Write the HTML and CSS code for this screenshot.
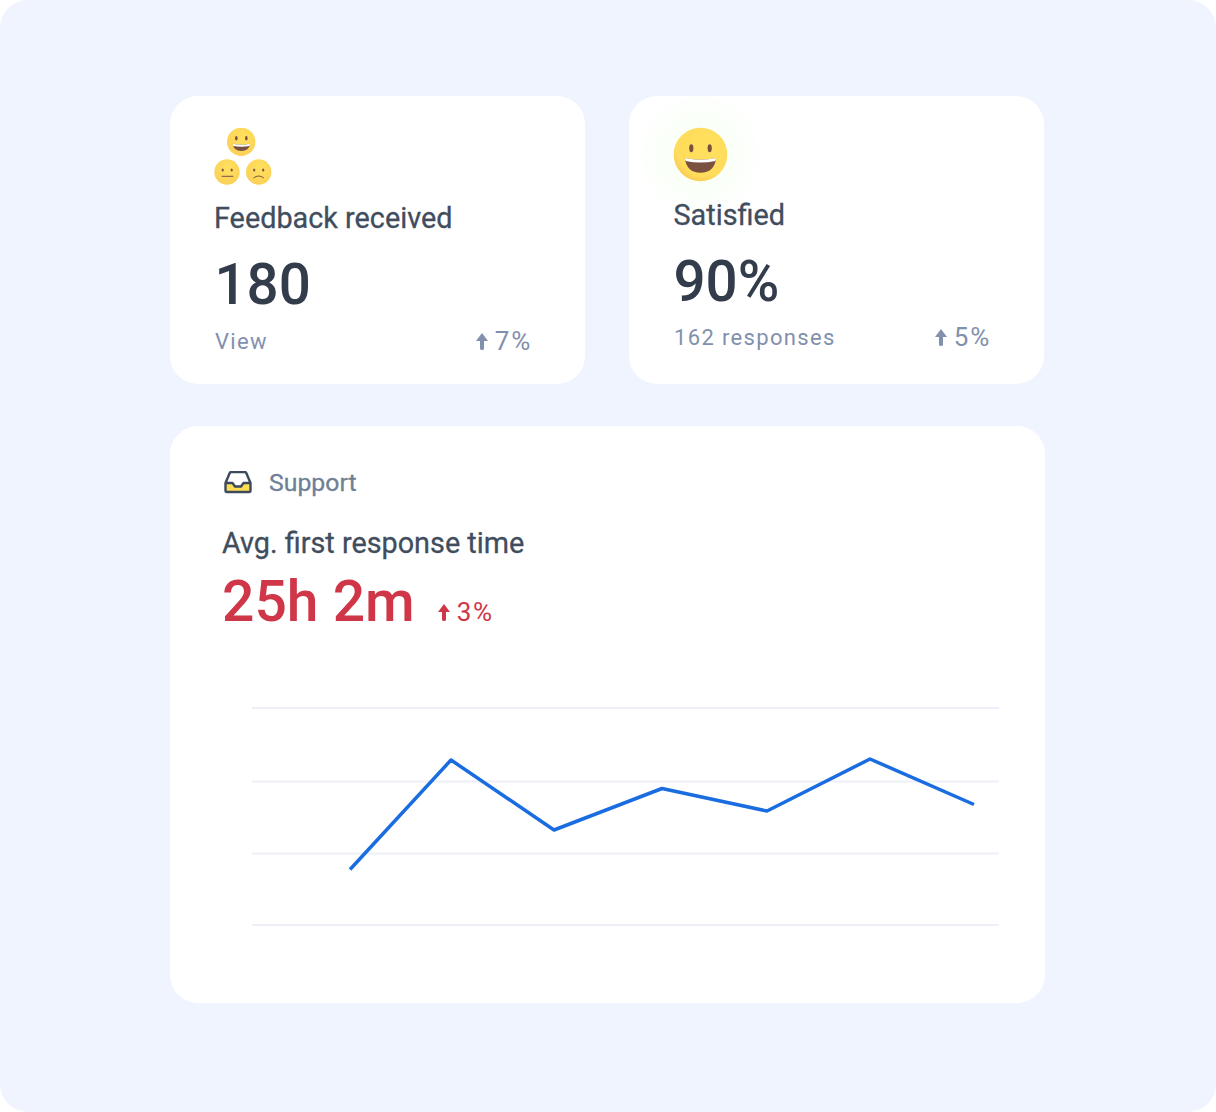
FILE: index.html
```html
<!DOCTYPE html>
<html lang="en">
<head>
<meta charset="utf-8">
<title>Feedback dashboard</title>
<link rel="stylesheet" href="styles.css">
</head>
<body>
<main class="page">
  <div class="top-row">
    <section class="card stat">
      <svg class="trio" width="58" height="58" viewBox="0 0 58 58" aria-hidden="true">
        <defs>
          <radialGradient id="fa" cx="55%" cy="35%" r="70%"><stop offset="0" stop-color="#FFE15E"/><stop offset="1" stop-color="#FBCF56"/></radialGradient>
        </defs>
        <circle cx="27.200" cy="13.800" r="14.200" fill="url(#fa)"/>
        <ellipse cx="22.300" cy="10.300" rx="1.300" ry="2.200" fill="#7A5140"/>
        <ellipse cx="32.300" cy="10.300" rx="1.300" ry="2.200" fill="#7A5140"/>
        <path d="M18.700 15.700q8.600 2 17.300 0q-.8 7.300-8.650 7.300t-8.650-7.300z" fill="#7A5140"/>
        <path d="M18.700 15.700q8.600 2 17.300 0l-.5 2.200q-8.150 1.500-16.300 0z" fill="#fff"/>
        <circle cx="13" cy="44" r="12.700" fill="url(#fa)"/>
        <ellipse cx="8.700" cy="42" rx="1.100" ry="1.500" fill="#7A5140"/>
        <ellipse cx="17.700" cy="42" rx="1.100" ry="1.500" fill="#7A5140"/>
        <path d="M7.700 48.300h11.600" stroke="#7A5140" stroke-width="1" fill="none"/>
        <circle cx="44.700" cy="44" r="12.700" fill="url(#fa)"/>
        <ellipse cx="40.200" cy="42" rx="1.100" ry="1.500" fill="#7A5140"/>
        <ellipse cx="49.200" cy="42" rx="1.100" ry="1.500" fill="#7A5140"/>
        <path d="M39.500 50q5.200-4 10.400 0" stroke="#7A5140" stroke-width="1" fill="none"/>
      </svg>
      <h2 class="label">Feedback received</h2>
      <p class="number">180</p>
      <div class="foot">
        <span class="sub">View</span>
        <span class="delta">
          <svg class="arrow" width="14" height="18" viewBox="0 0 14 18" aria-hidden="true"><path d="M7 1L13 9H9V16.500a2 1.500 0 0 1-4 0V9H1z" fill="#8190AD"/></svg>7%
        </span>
      </div>
    </section>
    <section class="card stat glow">
      <svg class="smile" width="55" height="55" viewBox="0 0 55 55" aria-hidden="true">
        <defs>
          <radialGradient id="fb" cx="58%" cy="38%" r="65%"><stop offset="0" stop-color="#FFE15E"/><stop offset=".8" stop-color="#FFDC5B"/><stop offset="1" stop-color="#FBCB56"/></radialGradient>
        </defs>
        <circle cx="27.500" cy="27.500" r="26.800" fill="url(#fb)"/>
        <ellipse cx="18.300" cy="21.300" rx="2.100" ry="4" fill="#7A5140"/>
        <ellipse cx="36.700" cy="21.300" rx="2.100" ry="4" fill="#7A5140"/>
        <path d="M11.700 31q15.800 3.500 31.600 0q-2 14.700-15.800 14.700t-15.800-14.700z" fill="#7A5140"/>
        <path d="M11.700 31q15.800 3.500 31.600 0l-.9 3q-14.900 3-29.800 0z" fill="#fff"/>
      </svg>
      <h2 class="label">Satisfied</h2>
      <p class="number">90%</p>
      <div class="foot">
        <span class="sub">162 responses</span>
        <span class="delta">
          <svg class="arrow" width="14" height="18" viewBox="0 0 14 18" aria-hidden="true"><path d="M7 1L13 9H9V16.500a2 1.500 0 0 1-4 0V9H1z" fill="#8190AD"/></svg>5%
        </span>
      </div>
    </section>
  </div>
  <section class="card wide">
    <div class="tag">
      <svg width="30" height="24" viewBox="0 1 30 24" aria-hidden="true">
        <path d="M2 13H10.500L12.500 16H17.500L19.500 13H28V22H2z" fill="#FFDD55"/>
        <path d="M2.500 13V20.500A1.500 1.500 0 0 0 4 22H26A1.500 1.500 0 0 0 27.500 20.500V13L23.500 3.500A2 2 0 0 0 21.700 2H8.300A2 2 0 0 0 6.500 3.500zM2.500 13H9.500L12 16.500H18L20.500 13H27.500" fill="none" stroke="#3C4A5B" stroke-width="2.400" stroke-linejoin="round"/>
      </svg>
      <span class="tag-name">Support</span>
    </div>
    <h2 class="label metric">Avg. first response time</h2>
    <div class="result">
      <span class="result-num">25h 2m</span>
      <span class="result-delta">
        <svg width="14" height="18" viewBox="0 0 14 18" aria-hidden="true"><path d="M7 1L13 9H9V16.500a2 1.500 0 0 1-4 0V9H1z" fill="#CF3647"/></svg>3%
      </span>
    </div>
    <svg class="chart" width="875" height="260" viewBox="0 0 875 260" aria-hidden="true">
      <g stroke="#EEF0F9" stroke-width="2" fill="none">
        <path d="M82 29H829"/><path d="M82 102.500H829"/><path d="M82 174.500H829"/><path d="M82 246H829"/>
      </g>
      <polyline points="180,190.500 281,81 384,151 492,109.500 597,132 700,80 804,125.500" fill="none" stroke="#1A6DE0" stroke-width="3.500" stroke-linejoin="round"/>
    </svg>
  </section>
</main>
</body>
</html>
```
FILE: styles.css
```css
* { box-sizing: border-box; }
html, body { margin: 0; background: #fff; }
body { font-family: Roboto, "Liberation Sans", sans-serif; }
h2, p { margin: 0; }
.page {
  width: 1216px;
  height: 1112px;
  background: #EFF4FF;
  border-radius: 28px;
  padding: 96px 171px 0 170px;
  display: flex;
  flex-direction: column;
  gap: 42px;
}
.top-row { display: flex; gap: 44px; }
.card { background: #fff; border-radius: 28px; }
.stat {
  width: 415px;
  height: 288px;
  padding: 32px 53px 0 44px;
  display: flex;
  flex-direction: column;
}
.trio { display: block; }
.smile { display: block; margin: -1px 0 17px 0; }
.glow {
  background: radial-gradient(circle at 71px 59px, #F8FFF5 0, #FAFFF8 35px, #fff 64px);
}
.label {
  font-size: 28.800px;
  line-height: 32px;
  font-weight: 400;
  color: #3F4D5E;
  -webkit-text-stroke: 0.3px #3F4D5E;
}
.stat .label { height: 34px; }
.smile + .label { margin-left: 0.500px; }
.trio + .label { margin-top: 16px; }
.number {
  margin: 16px 0 0 0.500px;
  font-size: 56.500px;
  line-height: 66px;
  font-weight: 500;
  color: #323C4A;
}
.foot {
  margin-top: 6px;
  display: flex;
  justify-content: space-between;
  align-items: center;
  height: 34px;
}
.glow .foot { margin-top: 5px; }
.sub { margin-left: 1px; font-size: 22px; color: #8190AD; letter-spacing: 1.350px; }
.delta { font-size: 26px; color: #8190AD; letter-spacing: 1.800px; display: flex; align-items: center; gap: 6px; }
.wide { width: 875px; height: 577px; padding: 40px 0 0 52px; position: relative; display: flex; flex-direction: column; }
.tag { display: flex; align-items: center; gap: 16px; height: 33px; margin-left: 1px; }
.tag-name { font-size: 24.800px; color: #6F7F97; -webkit-text-stroke: 0.3px #6F7F97; }
.metric { margin-top: 28px; }
.result { display: flex; align-items: baseline; gap: 22px; margin-top: 10px; }
.result-num { font-size: 57px; line-height: 66px; color: #CF3647; font-weight: 500; }
.result-delta { font-size: 26px; color: #CF3647; letter-spacing: 1.800px; display: inline-flex; align-items: center; gap: 6px; }
.chart { position: absolute; left: 0; top: 253px; }
```
